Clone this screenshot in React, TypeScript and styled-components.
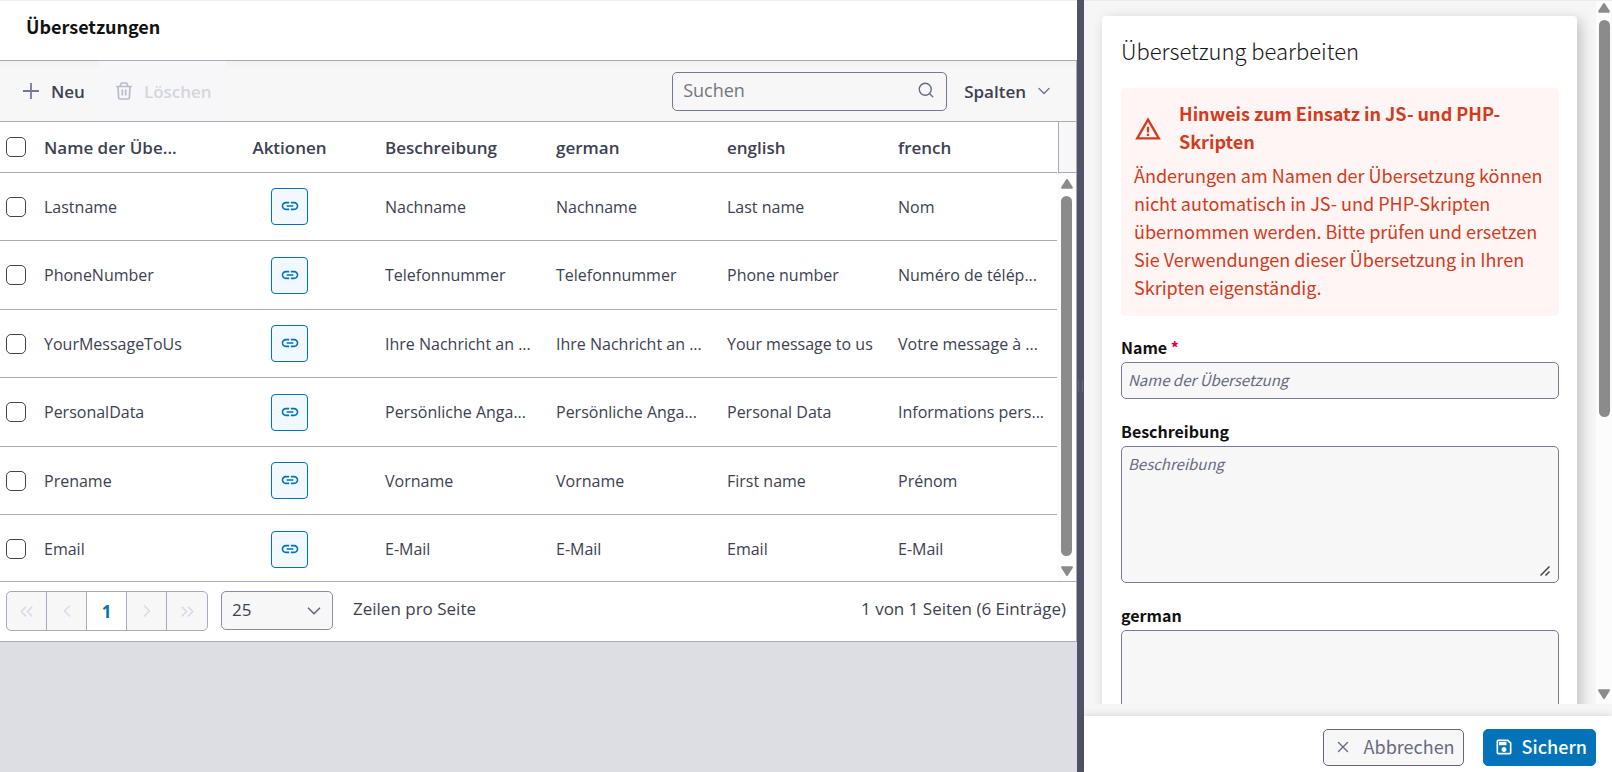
import React, { useId } from "react";
import styled, { createGlobalStyle, css } from "styled-components";
import { MdLink, MdWarningAmber, MdOutlineSave } from "react-icons/md";
import { Search, ChevronDown, ChevronLeft, ChevronRight, ChevronsLeft, ChevronsRight, X } from "lucide-react";

const ui = `"Segoe UI", "Open Sans", "Noto Sans", sans-serif`;
const source = `"Source Sans Pro", "Noto Sans CJK SC", sans-serif`;

const line = "#a7aabb";
const soft = "#f7f7f7";

const GlobalStyle = createGlobalStyle`
  *, *::before, *::after { box-sizing: border-box; }
  body { margin: 0; background: #dddee4; font-family: ${ui}; color: #3d4151; }
  h1, h2, p { margin: 0; }
  button, input, textarea, select { font-family: inherit; color: inherit; margin: 0; }
`;

const Page = styled.div`
  display: grid;
  grid-template-columns: minmax(0, 359fr) 7px minmax(0, 176fr);
  height: 100vh;
  overflow: hidden;
`;

/* ---------- list panel ---------- */

const ListPanel = styled.main`
  background: #dddee4;
  min-width: 0;
`;

const ListHeader = styled.header`
  display: flex;
  align-items: center;
  height: 60px;
  padding: 0 26px 10px;
  background: #fff;
  border-top: 1px solid #f0f0f0;
`;

const ListTitle = styled.h1`
  font: 700 18px/28px ${source};
  color: #111;
`;

const GridBox = styled.section`
  background: #fff;
  border: 1px solid ${line};
  border-left: 0;
`;

const Toolbar = styled.div`
  display: flex;
  align-items: center;
  height: 61px;
  padding: 0 9px;
  background: linear-gradient(#f1f1f1, ${soft} 8px);
  border-bottom: 1px solid ${line};
`;

const ToolButton = styled.button<{ $menu?: boolean }>`
  display: flex;
  align-items: center;
  gap: ${(p) => (p.$menu ? "8px" : "12px")};
  height: 60px;
  padding: 0 ${(p) => (p.$menu ? "13px 0 17px" : "14px")};
  border: 0;
  background: transparent;
  font-size: 17px;
  font-weight: 600;
  svg { color: #747896; }
  &:disabled {
    padding-left: 17px;
    background: #f7f7fa;
    color: #d4d5de;
  }
  &:disabled svg { color: #b9bbcb; }
`;

const SearchBox = styled.label`
  display: flex;
  align-items: center;
  width: 275px;
  height: 39px;
  margin-left: auto;
  padding: 0 11px 2px 10px;
  border: 1px solid #757990;
  border-radius: 5px;
  background: ${soft};
  color: #666a82;
  input {
    flex: 1;
    min-width: 0;
    padding: 0;
    border: 0;
    outline: 0;
    background: transparent;
    font-size: 18px;
  }
  input::placeholder { color: #72767f; opacity: 1; }
`;

const TableArea = styled.div`
  display: flex;
  border-bottom: 1px solid ${line};
`;

const Table = styled.table`
  flex: 1;
  width: 100%;
  min-width: 0;
  table-layout: fixed;
  border-collapse: separate;
  border-spacing: 0;
  font-size: 16px;
  th, td {
    padding: 0 10px 0 12px;
    text-align: left;
    white-space: nowrap;
    overflow: hidden;
    border-bottom: 1px solid ${line};
  }
  th { height: 51px; font-size: 17px; font-weight: 600; }
  td { height: 68px; }
  tr:nth-child(even) td { height: 69px; }
  tbody tr:last-child td { height: 66px; padding-top: 2px; border-bottom: 0; }
  th:first-child, td:first-child { padding: 0 0 0 6px; }
  th.center, td.center { text-align: center; padding: 0 1px 0 0; }
`;

const Check = styled.input`
  appearance: none;
  display: block;
  width: 20px;
  height: 20px;
  margin: 0;
  border: 1px solid #3f4354;
  border-radius: 5px;
  background: #fff;
`;

const LinkButton = styled.button`
  display: inline-flex;
  align-items: center;
  justify-content: center;
  width: 37px;
  height: 37px;
  padding: 0 0 1px;
  border: 1px solid #0273b8;
  border-radius: 4px;
  background: #f1f8fe;
  color: #0273b8;
`;

const GridScroll = styled.div`
  display: flex;
  flex: none;
  flex-direction: column;
  width: 19px;
`;

const GridScrollHead = styled.div`
  height: 51px;
  margin-left: 1px;
  background: ${soft};
  border-left: 1px solid ${line};
  border-bottom: 1px solid ${line};
`;

const Track = styled.div`
  flex: 1;
  display: flex;
  flex-direction: column;
  align-items: center;
  background: #fcfcfc;
  color: #8b8b8b;
  svg { display: block; flex: none; }
`;

const Thumb = styled.div<{ $share?: string }>`
  width: 11px;
  margin: 7px 0 10px;
  border-radius: 6px;
  background: #8b8b8b;
  ${(p) => (p.$share ? css`height: ${p.$share};` : css`flex: 1;`)}
`;

const GridTrack = styled(Track)`
  padding: 6px 0 5px;
`;

const Pager = styled.footer`
  display: flex;
  align-items: flex-start;
  height: 59px;
  padding: 9px 10px 0 6px;
  font-size: 17px;
`;

const PagerNav = styled.nav`
  display: flex;
  height: 40px;
  border: 1px solid ${line};
  border-radius: 5px;
  background: ${soft};
  overflow: hidden;
`;

const PageButton = styled.button`
  display: flex;
  align-items: center;
  justify-content: center;
  width: 40px;
  padding: 0;
  border: 0;
  border-right: 1px solid ${line};
  background: transparent;
  color: #d9dbe3;
  font-size: 17px;
  &:last-child { border-right: 0; }
  &[aria-current] { background: #fff; color: #0273b8; font-weight: 700; }
`;

const SelectWrap = styled.span`
  display: grid;
  align-items: center;
  width: 112px;
  height: 39px;
  margin: 0 20px 0 13px;
  > * { grid-area: 1 / 1; }
  svg { justify-self: end; margin-right: 8px; pointer-events: none; color: #666a82; }
  select {
    appearance: none;
    width: 100%;
    height: 100%;
    padding: 0 10px 2px;
    border: 1px solid #8a8ea3;
    border-radius: 5px;
    background: ${soft};
    font-size: 17px;
  }
`;

const PagerText = styled.span`
  line-height: 36px;
`;

const PageInfo = styled(PagerText)`
  margin-left: auto;
`;

const Splitter = styled.div`
  display: flex;
  align-items: center;
  justify-content: space-between;
  padding: 0 1px;
  background: #505366;
  &::before, &::after { content: ""; width: 1px; height: 12px; background: #62667f; }
`;

/* ---------- edit panel ---------- */

const EditPanel = styled.aside`
  display: flex;
  flex-direction: column;
  min-height: 0;
  background: #f6f6f6;
  font-family: ${source};
`;

const ScrollArea = styled.div`
  flex: 1;
  min-height: 0;
  display: flex;
  margin-bottom: 12px;
  overflow: hidden;
  border-top: 1px solid #ececec;
`;

const ScrollContent = styled.div`
  flex: 1;
  min-width: 0;
  padding: 15px 19px 0 18px;
`;

const PanelTrack = styled(Track)`
  flex: none;
  width: 16px;
  padding: 2px 0 5px;
  svg:last-child { margin-top: auto; }
`;

const Card = styled.form`
  display: flex;
  flex-direction: column;
  padding: 18px 18px 20px 19px;
  background: #fff;
  border-radius: 4px;
  box-shadow: 4px 4px 14px rgba(0, 0, 0, 0.22);
`;

const CardTitle = styled.h2`
  font-size: 22px;
  font-weight: 300;
  line-height: 32px;
  color: #15161c;
`;

const Notice = styled.div`
  display: flex;
  flex-direction: column;
  gap: 6px;
  margin: 22px 0;
  padding: 11px 12px 15px 13px;
  border-radius: 5px;
  background: #fff5f4;
  color: #d23b1d;
  font-size: 18px;
  line-height: 28px;
`;

const NoticeHead = styled.div`
  display: flex;
  align-items: center;
  gap: 17px;
  svg { flex: none; margin-top: 4px; }
`;

const Field = styled.div`
  display: flex;
  flex-direction: column;
  position: relative;
  margin-bottom: 23px;
  label {
    padding-bottom: 6px;
    font-size: 16px;
    font-weight: 700;
    line-height: 18px;
    color: #111;
  }
  label span { color: #e5004f; }
  input, textarea {
    width: 100%;
    border: 1px solid #777b99;
    border-radius: 5px;
    background: ${soft};
    font-size: 15px;
    line-height: 24px;
    outline: 0;
    resize: none;
  }
  input { height: 37px; padding: 0 6px 2px; }
  textarea { display: block; height: 137px; padding: 5px 6px; }
  ::placeholder { color: #666a82; font-style: italic; opacity: 1; }
`;

const Grip = styled.svg`
  position: absolute;
  right: 9px;
  bottom: 7px;
`;

const Actions = styled.footer`
  display: flex;
  align-items: flex-start;
  justify-content: flex-end;
  gap: 19px;
  height: 56px;
  padding: 13px 16px 0;
  background: #fff;
  box-shadow: 0 -1px 8px rgba(0, 0, 0, 0.12);
`;

const ActionButton = styled.button<{ $primary?: boolean }>`
  display: flex;
  align-items: center;
  gap: 12px;
  height: 37px;
  padding: 0 8px 3px 10px;
  border: 1px solid #62667f;
  border-radius: 5px;
  background: ${soft};
  color: #666a82;
  font-size: 18px;
  svg { margin-top: 2px; }
  ${(p) => p.$primary && css`
    gap: 8px;
    border-color: #0273b8;
    background: #0273b8;
    color: #fff;
    font-weight: 500;
  `}
`;

const PlusIcon = () => (
  <svg width="16" height="16" viewBox="0 0 16 16" fill="none" stroke="currentColor" strokeWidth="1.8" aria-hidden>
    <path d="M8 0v16M0 8h16" />
  </svg>
);

const TrashIcon = () => (
  <svg width="16" height="18" viewBox="0 0 16 18" fill="none" stroke="currentColor" strokeWidth="1.7" aria-hidden>
    <path d="M0 4.500h16M4 4.500L5 1.800Q5.300 1 6 1h4q.7 0 1 .8l1 2.700M2 4.500l.6 11Q2.700 17 4 17h8q1.300 0 1.400-1.500l.6-11M6.300 7.500v6M9.700 7.500v6" />
  </svg>
);

const Arrow = ({ down }: { down?: boolean }) => (
  <svg width="12" height="10" viewBox="0 0 12 10" fill="currentColor" aria-hidden>
    <path
      transform={down ? "rotate(180 6 5)" : undefined}
      d="M6.900.6l4.800 7.400Q12.300 9.500 11 9.700H1Q-.3 9.500.3 8L5.100.6Q6-.4 6.900.6z"
    />
  </svg>
);

const rows = [
  ["Lastname", "Nachname", "Nachname", "Last name", "Nom"],
  ["PhoneNumber", "Telefonnummer", "Telefonnummer", "Phone number", "Numéro de télép..."],
  ["YourMessageToUs", "Ihre Nachricht an ...", "Ihre Nachricht an ...", "Your message to us", "Votre message à ..."],
  ["PersonalData", "Persönliche Anga...", "Persönliche Anga...", "Personal Data", "Informations pers..."],
  ["Prename", "Vorname", "Vorname", "First name", "Prénom"],
  ["Email", "E-Mail", "E-Mail", "Email", "E-Mail"],
];

const TextField = ({ label, placeholder, required, multiline }: {
  label: string; placeholder?: string; required?: boolean; multiline?: boolean;
}) => {
  const id = useId();
  return (
    <Field>
      <label htmlFor={id}>{label}{required && <span> *</span>}</label>
      {multiline ? <textarea id={id} placeholder={placeholder} /> : <input id={id} placeholder={placeholder} />}
      {multiline && (
        <Grip width="10" height="10" viewBox="0 0 10 10" stroke="#444" strokeWidth="1.5" aria-hidden>
          <path d="M.5 9.500l9-9M5.500 9.500l4-4" />
        </Grip>
      )}
    </Field>
  );
};

export default function App() {
  return (
    <>
      <GlobalStyle />
      <Page>
        <ListPanel>
          <ListHeader><ListTitle>Übersetzungen</ListTitle></ListHeader>
          <GridBox>
            <Toolbar>
              <ToolButton type="button"><PlusIcon />Neu</ToolButton>
              <ToolButton type="button" disabled><TrashIcon />Löschen</ToolButton>
              <SearchBox>
                <input type="text" placeholder="Suchen" aria-label="Suchen" />
                <Search size={18} strokeWidth={1.8} />
              </SearchBox>
              <ToolButton type="button" $menu>Spalten<ChevronDown size={20} strokeWidth={1.8} /></ToolButton>
            </Toolbar>
            <TableArea>
              <Table>
                <colgroup>
                  <col style={{ width: 32 }} />
                  <col style={{ width: 175 }} />
                  <col style={{ width: 166 }} />
                  <col /><col /><col /><col />
                </colgroup>
                <thead>
                  <tr>
                    <th><Check type="checkbox" aria-label="Alle auswählen" /></th>
                    <th>Name der Übe...</th>
                    <th className="center">Aktionen</th>
                    <th>Beschreibung</th>
                    <th>german</th>
                    <th>english</th>
                    <th>french</th>
                  </tr>
                </thead>
                <tbody>
                  {rows.map(([name, ...rest]) => (
                    <tr key={name}>
                      <td><Check type="checkbox" aria-label={name} /></td>
                      <td>{name}</td>
                      <td className="center">
                        <LinkButton type="button" aria-label="Link"><MdLink size={20} /></LinkButton>
                      </td>
                      {rest.map((text, i) => <td key={i}>{text}</td>)}
                    </tr>
                  ))}
                </tbody>
              </Table>
              <GridScroll>
                <GridScrollHead />
                <GridTrack><Arrow /><Thumb /><Arrow down /></GridTrack>
              </GridScroll>
            </TableArea>
            <Pager>
              <PagerNav aria-label="Seiten">
                <PageButton type="button" aria-label="Erste Seite"><ChevronsLeft size={21} strokeWidth={1.8} /></PageButton>
                <PageButton type="button" aria-label="Vorherige Seite"><ChevronLeft size={20} strokeWidth={1.8} /></PageButton>
                <PageButton type="button" aria-current="page">1</PageButton>
                <PageButton type="button" aria-label="Nächste Seite"><ChevronRight size={20} strokeWidth={1.8} /></PageButton>
                <PageButton type="button" aria-label="Letzte Seite"><ChevronsRight size={21} strokeWidth={1.8} /></PageButton>
              </PagerNav>
              <SelectWrap>
                <select aria-label="Zeilen pro Seite" defaultValue="25"><option>25</option></select>
                <ChevronDown size={22} strokeWidth={1.8} />
              </SelectWrap>
              <PagerText>Zeilen pro Seite</PagerText>
              <PageInfo>1 von 1 Seiten (6 Einträge)</PageInfo>
            </Pager>
          </GridBox>
        </ListPanel>
        <Splitter role="separator" />
        <EditPanel>
          <ScrollArea>
            <ScrollContent>
              <Card id="edit-form">
                <CardTitle>Übersetzung bearbeiten</CardTitle>
                <Notice role="note">
                  <NoticeHead>
                    <MdWarningAmber size={28} />
                    <strong>Hinweis zum Einsatz in JS- und PHP-Skripten</strong>
                  </NoticeHead>
                  <p>
                    Änderungen am Namen der Übersetzung können nicht automatisch in JS- und PHP-Skripten
                    übernommen werden. Bitte prüfen und ersetzen Sie Verwendungen dieser Übersetzung in
                    Ihren Skripten eigenständig.
                  </p>
                </Notice>
                <TextField label="Name" placeholder="Name der Übersetzung" required />
                <TextField label="Beschreibung" placeholder="Beschreibung" multiline />
                <TextField label="german" multiline />
              </Card>
            </ScrollContent>
            <PanelTrack><Arrow /><Thumb $share="57%" /><Arrow down /></PanelTrack>
          </ScrollArea>
          <Actions>
            <ActionButton type="button"><X size={18} strokeWidth={1.8} />Abbrechen</ActionButton>
            <ActionButton type="submit" form="edit-form" $primary><MdOutlineSave size={20} />Sichern</ActionButton>
          </Actions>
        </EditPanel>
      </Page>
    </>
  );
}
